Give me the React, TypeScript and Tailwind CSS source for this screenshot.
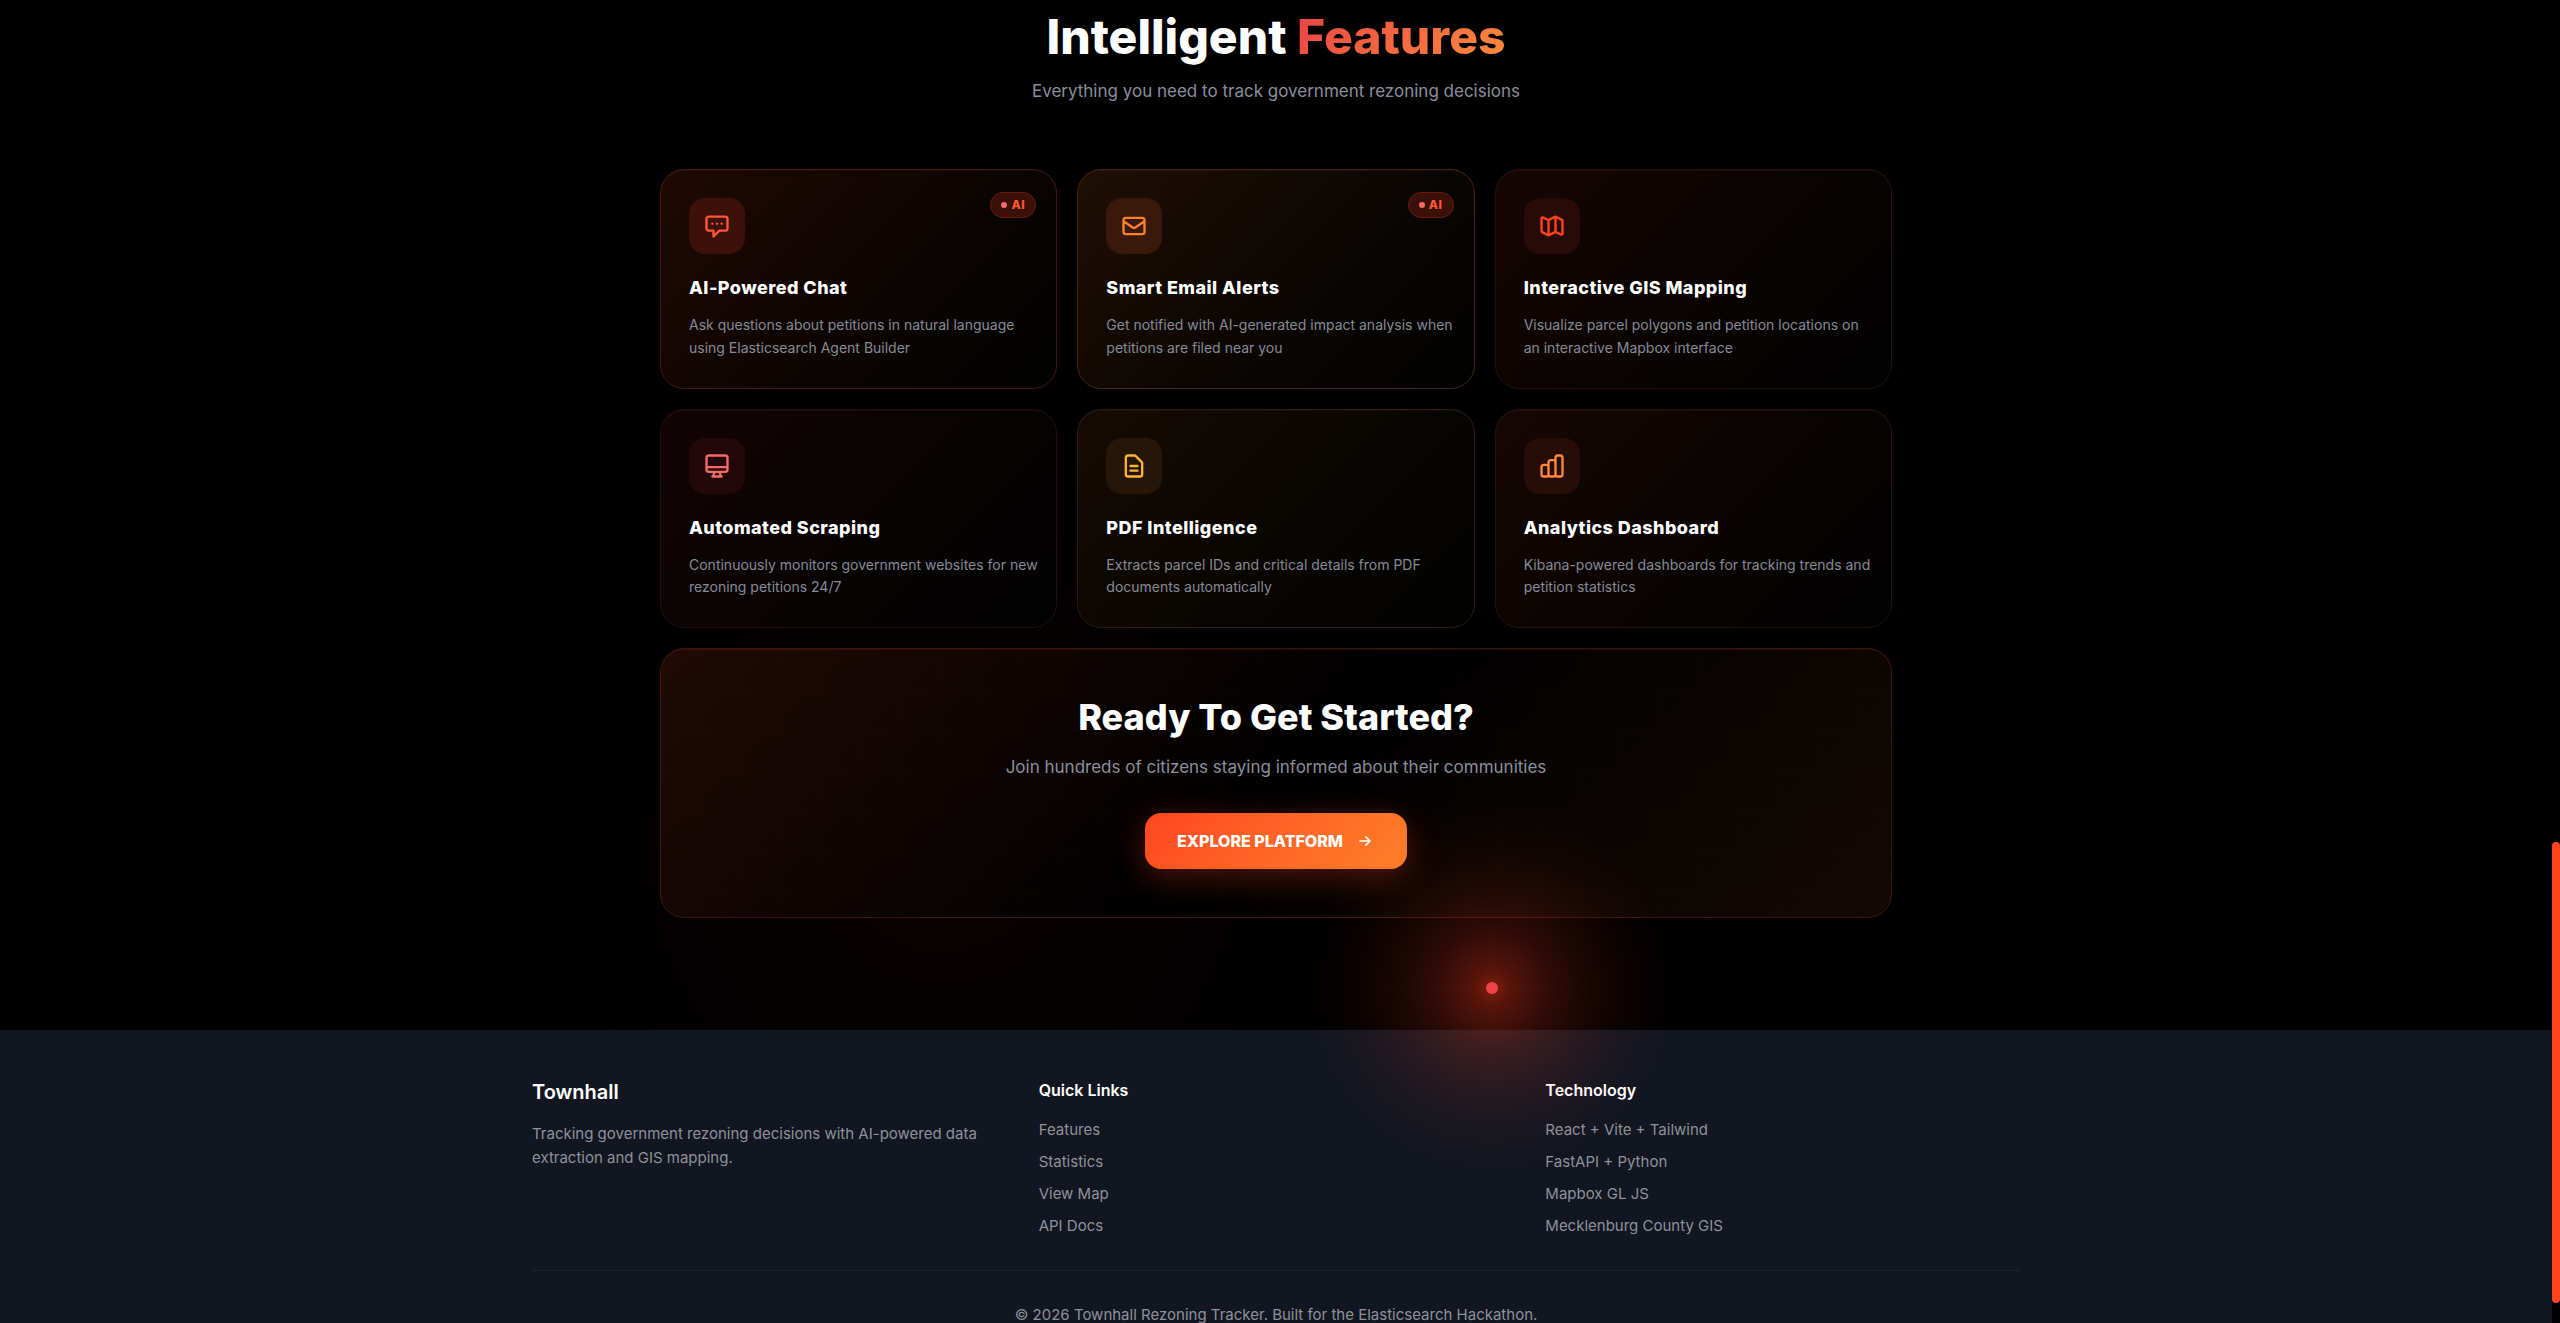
import { ReactNode } from 'react';

type Feature = {
    title: string;
    text: string;
    ai?: boolean;
    card: string;
    iconBox: string;
    icon: ReactNode;
};

const features: Feature[] = [
    {
        title: 'AI-Powered Chat',
        text: 'Ask questions about petitions in natural language using Elasticsearch Agent Builder',
        ai: true,
        card: 'border-[#4a160c] from-[#200904] via-[#0e0502] to-[#020201]',
        iconBox: 'bg-[#3b1108] text-[#ff5733]',
        icon: <path d="M8 10h.01M12 10h.01M16 10h.01M9 16H5a2 2 0 01-2-2V6a2 2 0 012-2h14a2 2 0 012 2v8a2 2 0 01-2 2h-5l-5 5v-5z" />,
    },
    {
        title: 'Smart Email Alerts',
        text: 'Get notified with AI-generated impact analysis when petitions are filed near you',
        ai: true,
        card: 'border-[#47220e] from-[#1f0f05] via-[#0d0703] to-[#020201]',
        iconBox: 'bg-[#391a0a] text-[#ff7f2a]',
        icon: <path d="M3 8l7.89 5.26a2 2 0 002.22 0L21 8M5 19h14a2 2 0 002-2V7a2 2 0 00-2-2H5a2 2 0 00-2 2v10a2 2 0 002 2z" />,
    },
    {
        title: 'Interactive GIS Mapping',
        text: 'Visualize parcel polygons and petition locations on an interactive Mapbox interface',
        card: 'border-[#2b0e08] from-[#160603] via-[#0a0402] to-[#020101]',
        iconBox: 'bg-[#280b06] text-[#ff4520]',
        icon: <path d="M9 20l-5.447-2.724A1 1 0 013 16.382V5.618a1 1 0 011.447-.894L9 7m0 13l6-3m-6 3V7m6 10l4.553 2.276A1 1 0 0021 18.382V7.618a1 1 0 00-.553-.894L15 4m0 13V4m0 0L9 7" />,
    },
    {
        title: 'Automated Scraping',
        text: 'Continuously monitors government websites for new rezoning petitions 24/7',
        card: 'border-[#280b0b] from-[#120404] via-[#090303] to-[#020101]',
        iconBox: 'bg-[#240809] text-[#f76a6a]',
        icon: <path d="M9.75 17L9 20l-1 1h8l-1-1-.75-3M3 13h18M5 17h14a2 2 0 002-2V5a2 2 0 00-2-2H5a2 2 0 00-2 2v10a2 2 0 002 2z" />,
    },
    {
        title: 'PDF Intelligence',
        text: 'Extracts parcel IDs and critical details from PDF documents automatically',
        card: 'border-[#301b0b] from-[#160b04] via-[#0a0602] to-[#020201]',
        iconBox: 'bg-[#271508] text-[#fbb534]',
        icon: <path d="M9 12h6m-6 4h6m2 5H7a2 2 0 01-2-2V5a2 2 0 012-2h5.586a1 1 0 01.707.293l5.414 5.414a1 1 0 01.293.707V19a2 2 0 01-2 2z" />,
    },
    {
        title: 'Analytics Dashboard',
        text: 'Kibana-powered dashboards for tracking trends and petition statistics',
        card: 'border-[#2b1008] from-[#160703] via-[#0a0402] to-[#020101]',
        iconBox: 'bg-[#280d06] text-[#fb8a3c]',
        icon: <path d="M9 19v-6a2 2 0 00-2-2H5a2 2 0 00-2 2v6a2 2 0 002 2h2a2 2 0 002-2zm0 0V9a2 2 0 012-2h2a2 2 0 012 2v10m-6 0a2 2 0 002 2h2a2 2 0 002-2m0 0V5a2 2 0 012-2h2a2 2 0 012 2v14a2 2 0 01-2 2h-2a2 2 0 01-2-2z" />,
    },
];

const quickLinks = ['Features', 'Statistics', 'View Map', 'API Docs'];
const technology = ['React + Vite + Tailwind', 'FastAPI + Python', 'Mapbox GL JS', 'Mecklenburg County GIS'];

function FeatureCard({ feature }: { feature: Feature }) {
    return (
        <article className={`relative rounded-3xl border bg-linear-135 p-7 shadow-[inset_0_1px_0_rgba(255,255,255,0.04)] ${feature.card}`}>
            {feature.ai && (
                <span className="absolute top-[22px] right-5 flex h-[26px] items-center gap-1 rounded-full border border-[#6b1d10] bg-[#3a1009] px-2.5 text-xs font-extrabold tracking-wider text-[#ff5733]">
                    <span className="size-1.5 rounded-full bg-[#f76a6a]" />
                    AI
                </span>
            )}
            <div className={`mb-5 flex size-14 items-center justify-center rounded-2xl ${feature.iconBox}`}>
                <svg className="size-7" viewBox="0 0 24 24" fill="none" stroke="currentColor" strokeWidth={2} strokeLinecap="round" strokeLinejoin="round">
                    {feature.icon}
                </svg>
            </div>
            <h3 className="mb-3 text-lg font-extrabold tracking-wide text-white">{feature.title}</h3>
            <p className="-mr-2.5 text-sm leading-relaxed text-[#868b96]">{feature.text}</p>
        </article>
    );
}

function Cta() {
    return (
        <section className="relative mt-5 overflow-hidden rounded-3xl border border-[#3d160a] bg-[linear-gradient(135deg,#200a05_0%,#000000_50%,#140904_100%)] p-12 text-center shadow-[inset_0_1px_0_rgba(255,69,32,0.1)]">
            {/* faint grid */}
            <div className="absolute inset-0 bg-[linear-gradient(rgba(255,69,32,0.02)_1px,transparent_1px),linear-gradient(90deg,rgba(255,69,32,0.02)_1px,transparent_1px)] bg-size-[40px_40px]" />
            <div className="relative">
                <h2 className="mb-4 text-4xl font-extrabold text-white">Ready To Get Started?</h2>
                <p className="mb-8 text-[17px] leading-7 text-[#8b8f9b]">Join hundreds of citizens staying informed about their communities</p>
                <button className="inline-flex h-14 items-center gap-3 rounded-2xl bg-linear-135 from-[#ff4520] to-[#ff7f2a] px-8 font-extrabold text-white shadow-[0_8px_32px_rgba(255,69,32,0.3)]">
                    EXPLORE PLATFORM
                    <svg className="size-5" viewBox="0 0 24 24" fill="none" stroke="currentColor" strokeWidth={2} strokeLinecap="round" strokeLinejoin="round">
                        <path d="M13 7l5 5m0 0l-5 5m5-5H6" />
                    </svg>
                </button>
            </div>
        </section>
    );
}

function Footer() {
    return (
        <footer className="relative bg-[#121620] py-12 text-[15px] leading-6 text-[#8f929b]">
            <div className="mx-auto max-w-[1536px] px-6">
                <div className="grid grid-cols-3 gap-8">
                    <div>
                        <h3 className="mb-4 text-xl font-semibold text-white">Townhall</h3>
                        <p>Tracking government rezoning decisions with AI-powered data extraction and GIS mapping.</p>
                    </div>
                    <div>
                        <h4 className="mb-4 text-base font-semibold text-white">Quick Links</h4>
                        <ul className="space-y-2">
                            {quickLinks.map((link) => (
                                <li key={link}><a href="#">{link}</a></li>
                            ))}
                        </ul>
                    </div>
                    <div>
                        <h4 className="mb-4 text-base font-semibold text-white">Technology</h4>
                        <ul className="space-y-2">
                            {technology.map((item) => (
                                <li key={item}>{item}</li>
                            ))}
                        </ul>
                    </div>
                </div>
                <div className="mt-8 border-t border-[#1d212b] pt-8 text-center">
                    <p>© 2026 Townhall Rezoning Tracker. Built for the Elasticsearch Hackathon.</p>
                </div>
            </div>
        </footer>
    );
}

export default function App() {
    return (
        <div className="relative flex h-screen overflow-hidden bg-black font-[Inter,sans-serif]">
            {/* ambient light behind the page */}
            <div className="pointer-events-none absolute top-[450px] left-[544px] size-[800px] rounded-full bg-[radial-gradient(circle,rgba(255,50,32,0.04)_0%,transparent_70%)]" />

            <div className="relative min-w-0 flex-1">
                <main className="mx-auto max-w-7xl px-6 pt-[13px] pb-28">
                    <div className="mb-16 text-center">
                        <h2 className="mb-4 text-5xl leading-none font-extrabold text-white">
                            Intelligent{' '}
                            <span className="bg-linear-135 from-[#ea4043] to-[#fb8a3c] bg-clip-text text-transparent">Features</span>
                        </h2>
                        <p className="text-[17px] leading-7 text-[#8b8f9b]">Everything you need to track government rezoning decisions</p>
                    </div>
                    <div className="grid grid-cols-3 gap-5">
                        {features.map((feature) => (
                            <FeatureCard key={feature.title} feature={feature} />
                        ))}
                    </div>
                    <Cta />
                </main>
                <Footer />
            </div>

            {/* scroll track */}
            <div className="flex w-2 shrink-0 flex-col justify-end bg-black pb-5">
                <div className="h-[461px] rounded-full bg-[#ff4520]" />
            </div>

            {/* cursor glow */}
            <div className="pointer-events-none absolute top-[788px] left-[1292px] flex size-[400px] items-center justify-center rounded-full bg-[radial-gradient(circle,rgba(255,60,32,0.42)_0px,rgba(255,60,32,0.36)_14px,rgba(255,60,32,0.28)_34px,rgba(255,60,32,0.18)_60px,rgba(255,60,32,0.1)_95px,rgba(255,60,32,0.04)_135px,transparent_185px)]">
                <div className="size-3 rounded-full bg-[#ef4444] shadow-[0_0_16px_rgba(255,60,32,0.5)]" />
            </div>
        </div>
    );
}
